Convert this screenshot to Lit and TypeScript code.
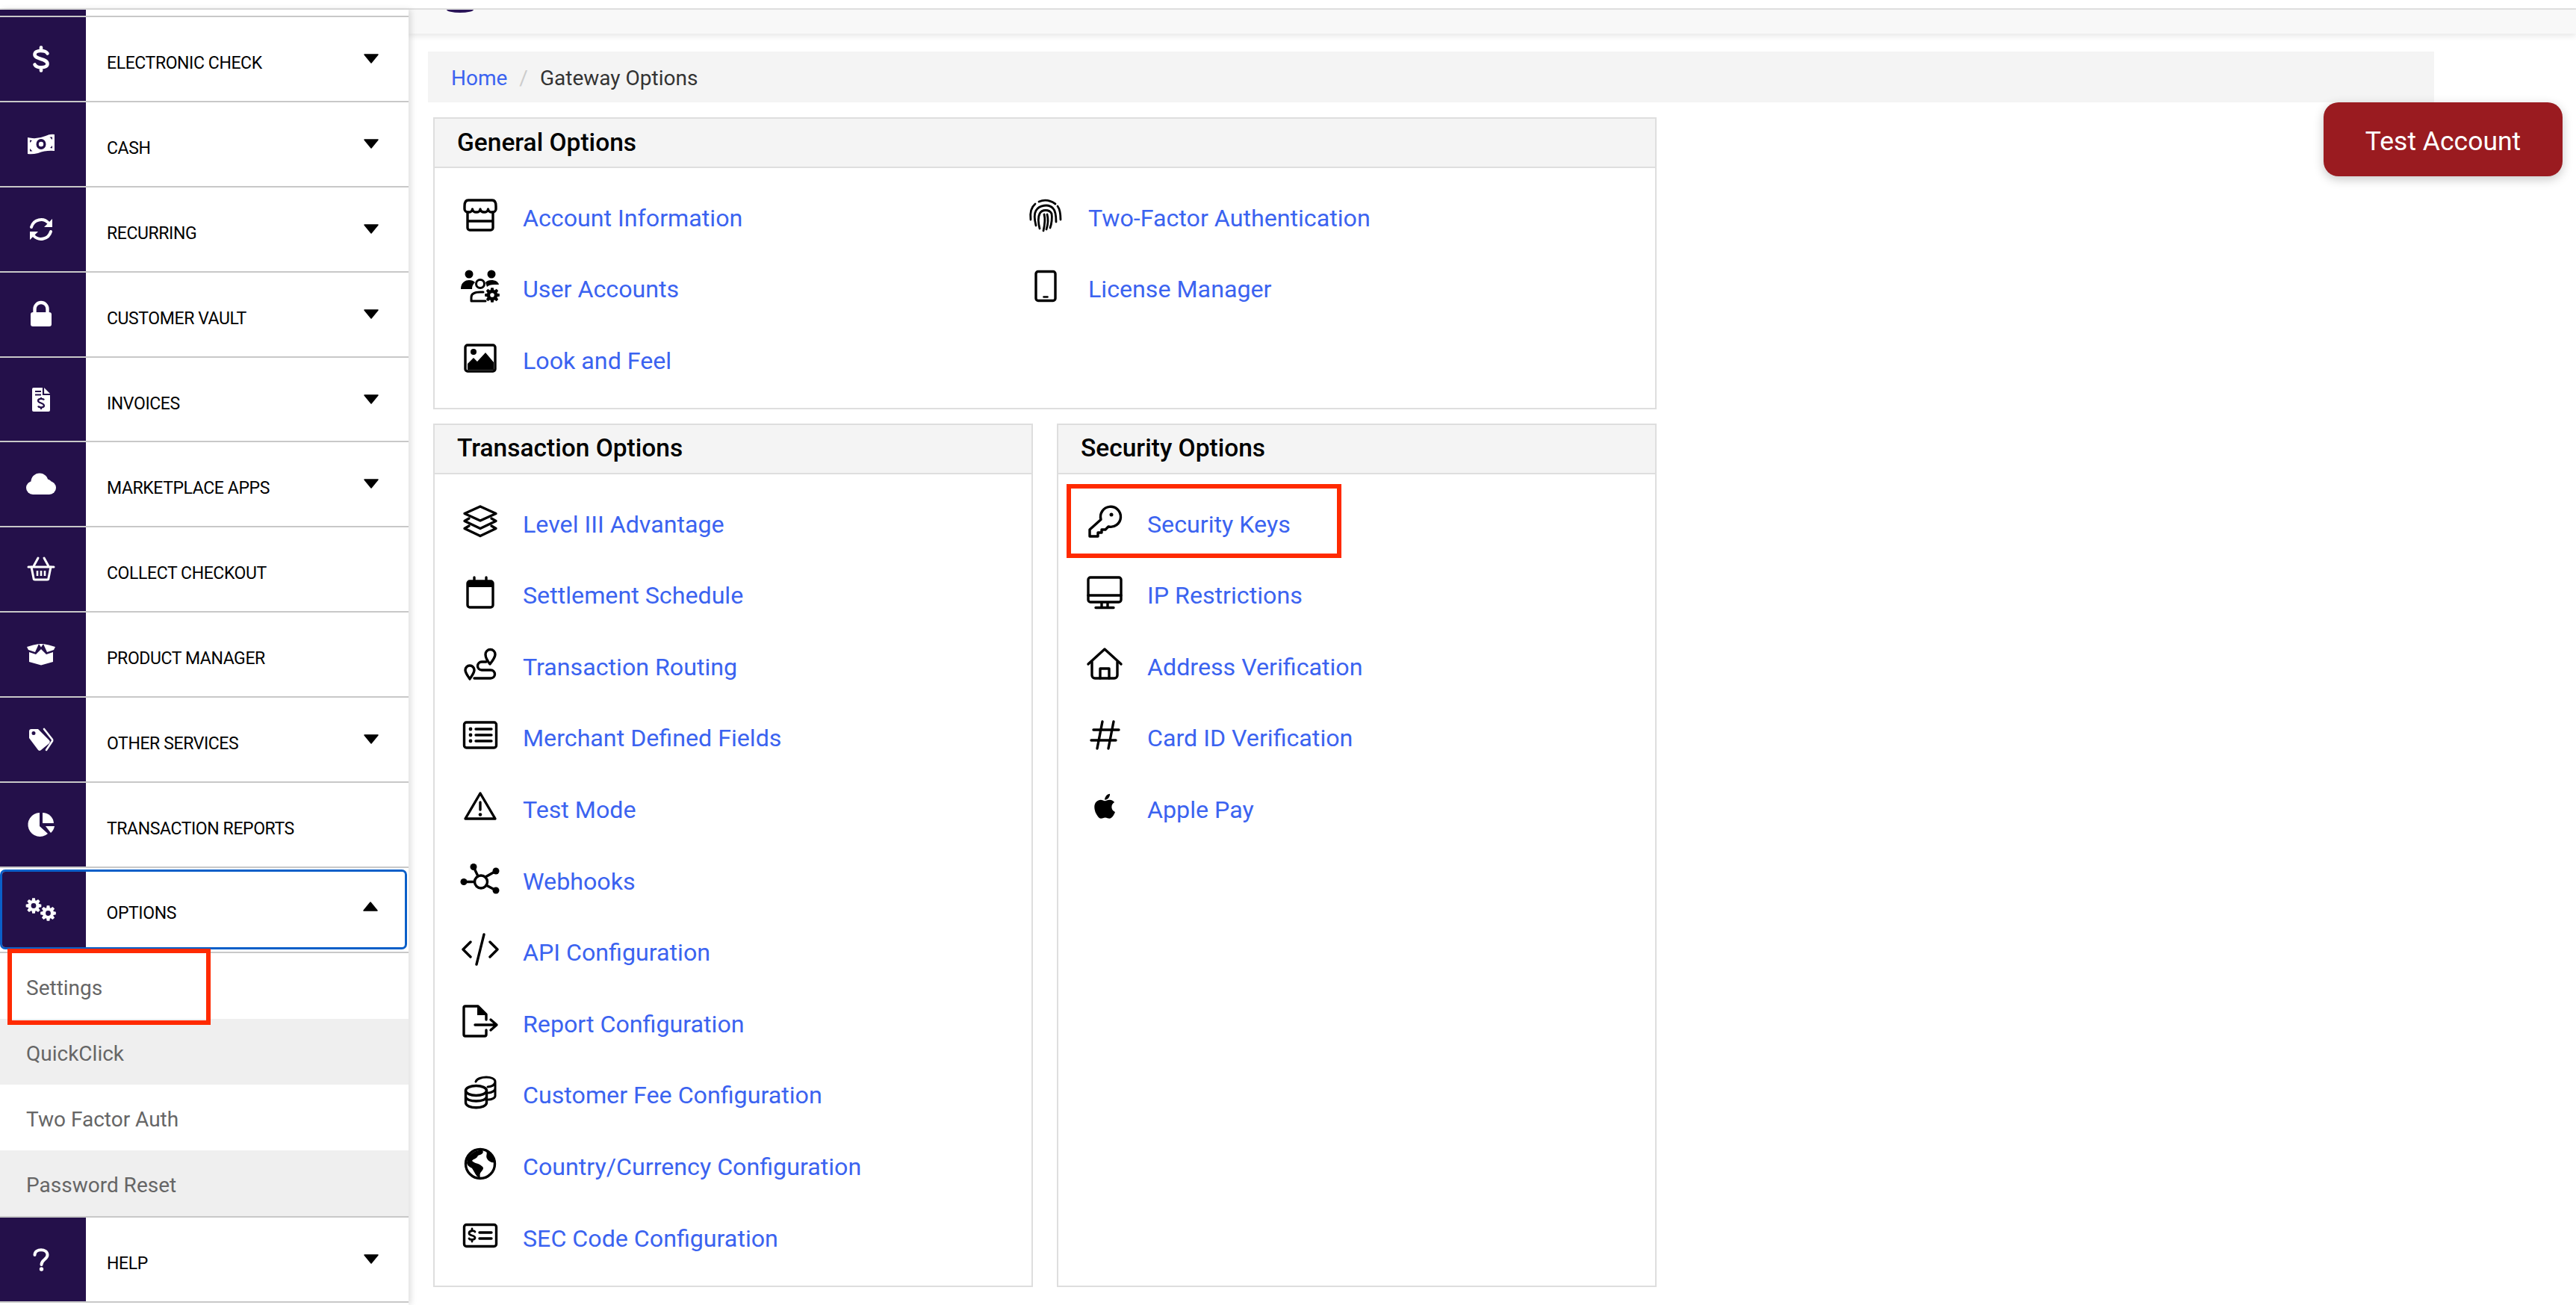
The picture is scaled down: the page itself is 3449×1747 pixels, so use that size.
import { LitElement, html, svg, css } from "lit";
import { customElement } from "lit/decorators.js";

function gear(cx: number, cy: number, ro: number, ri: number, hole: number, teeth = 8) {
  const pts: string[] = [];
  const step = (Math.PI * 2) / teeth;
  for (let i = 0; i < teeth; i++) {
    const a = i * step;
    const w = step * 0.22;
    const list: [number, number][] = [
      [ri, a - step / 2 + w * 0.4],
      [ro, a - w],
      [ro, a + w],
      [ri, a + step / 2 - w * 0.4],
    ];
    for (const [r, t] of list) {
      pts.push(`${(cx + r * Math.cos(t)).toFixed(2)} ${(cy + r * Math.sin(t)).toFixed(2)}`);
    }
  }
  return `M${pts.join("L")}Z M${cx - hole} ${cy}a${hole} ${hole} 0 1 0 ${hole * 2} 0a${hole} ${hole} 0 1 0 ${-hole * 2} 0Z`;
}

const DARK = "#24104a";

const side: Record<string, any> = {
  dollar: svg`<path class="s" stroke-width="4.6" d="M8.5 -7.5C6 -12 -8.5 -13 -8.5 -6C-8.5 1 8.5 -1 8.5 6.5C8.5 13 -6 12.5 -8.5 7.5M0 -15.5V-12M0 12V15.5"/>`,
  money: svg`<path class="f" fill-rule="evenodd" d="M-18 -9Q-6 -6 6 -11Q12 -14 18 -13V9Q6 8 -4 12Q-12 14 -18 13ZM-6.500 0a6.500 7 0 1 0 13 0a6.500 7 0 1 0 -13 0ZM-15 -5.500V-2L-12 -5ZM15 -9.500H11.500L15 -6ZM-15 9.500H-11.500L-15 6ZM15 5.500L12 5L15 2Z"/><circle class="f" cx="0" cy="0" r="3.200"/>`,
  sync: svg`<path class="s" stroke-width="4" stroke-linecap="butt" d="M-13 -3A13.5 13.5 0 0 1 10 -8.500M13 3A13.5 13.5 0 0 1 -10 8.500"/><path class="f" d="M15 -14V-3H4ZM-15 14V3H-4Z"/>`,
  lock: svg`<path class="s" stroke-width="4.4" d="M-8.500 -3V-7.500a8.500 8.500 0 0 1 17 0V-3"/><rect class="f" x="-14" y="-3" width="28" height="19" rx="3"/>`,
  invoice: svg`<path class="f" d="M-12 -14a2 2 0 0 1 2 -2H4L12 -8V14a2 2 0 0 1 -2 2H-10a2 2 0 0 1 -2 -2Z"/><path fill="none" stroke=${DARK} stroke-width="2.2" d="M-8 -11H0M-8 -6.500H0M3 -16V-7H12"/><path fill="none" stroke=${DARK} stroke-width="2.2" d="M4 0.500C3 -1.500 -4 -2 -4 1.500C-4 5 4 4 4 8C4 11 -3 11 -4 8.500M0 -3V-1M0 11V13"/>`,
  cloud: svg`<g class="f"><circle cx="-11" cy="5" r="9"/><circle cx="-2" cy="-3" r="11.500"/><circle cx="11" cy="5" r="9"/><circle cx="8" cy="0" r="6.500"/><rect x="-11" y="3" width="22" height="11"/></g>`,
  basket: svg`<g fill="none" stroke="#fff" stroke-width="3" stroke-linecap="round" stroke-linejoin="round"><path d="M-17 -3H17"/><path d="M-13 -3L-10 12a2 2 0 0 0 2 2H8a2 2 0 0 0 2 -2L13 -3"/><path d="M-10 -4L-4 -15M10 -4L4 -15"/><path stroke-width="2.6" stroke-linecap="butt" d="M-5 2V9M0 2V9M5 2V9"/></g>`,
  box: svg`<path class="f" d="M-16 -3L-7 0L0 -7L7 0L16 -3V10L0 14.500L-16 10Z"/><path class="f" d="M-19 -10Q-10 -13 -3 -14L-8 -3L-17 -6ZM19 -10Q10 -13 3 -14L8 -3L17 -6Z"/><path class="f" d="M-3 -14H3L0 -9.500Z"/>`,
  tags: svg`<path class="f" fill-rule="evenodd" d="M-16 -11a3 3 0 0 1 3 -3H-4L11 1a3 3 0 0 1 0 4L0 14a3 3 0 0 1 -4 0L-16 -2ZM-12.500 -8.500a2.500 2.500 0 1 0 5 0a2.500 2.500 0 1 0 -5 0Z"/><path class="s" stroke-width="2.6" d="M4 -14L15 0a3 3 0 0 1 0 2L7 14"/>`,
  pie: svg`<path class="f" d="M-2 -16A16 16 0 1 0 9 12L-2 2Z"/><path class="f" d="M2 -16A15 15 0 0 1 17 -2H2Z"/><path class="f" d="M6 2H18A16 16 0 0 1 13 11Z"/>`,
  cogs: svg`<path class="f" fill-rule="evenodd" d=${gear(-10, -4.5, 10.5, 7.5, 3.4)}/><path class="f" fill-rule="evenodd" d=${gear(9.5, 5.5, 10.5, 7.5, 3.4)}/>`,
  help: svg`<path class="s" stroke-width="4" d="M-8.500 -6C-8.500 -15 8.500 -15 8.500 -6C8.500 0 0.500 0 0.500 7"/><circle class="f" cx="0.500" cy="13" r="2.700"/>`,
};

const ic: Record<string, any> = {
  store: svg`<path d="M-16 -20H16Q21 -20 21 -12V-8a5.250 4 0 0 1 -10.500 0a5.250 4 0 0 1 -10.500 0a5.250 4 0 0 1 -10.500 0a5.250 4 0 0 1 -10.500 0V-12Q-21 -20 -16 -20Z"/><path d="M-17 -4V17a3 3 0 0 0 3 3H14a3 3 0 0 0 3 -3V-4M-17 8H17"/>`,
  users: svg`<g class="k"><circle cx="-15" cy="-16" r="5.500"/><circle cx="15" cy="-16" r="5.500"/><path d="M-26 4C-26 -5 -20 -8 -15 -8C-11 -8 -9 -7 -7 -5C-10 -2 -11 0 -11 4Z"/><path d="M7 -5C9 -7 11 -8 15 -8C20 -8 24 -6 25 -2L19 -2C14 -2 11 -1 9 1Z"/></g><circle stroke-width="3" cx="0" cy="-3" r="5.500"/><path stroke-width="3" d="M-12 20V15C-12 10 -8 8 0 8H4M-12 20H7"/><path class="k" fill-rule="evenodd" d=${gear(16, 12, 10, 7.2, 2.8)}/>`,
  image: svg`<rect x="-20" y="-17" width="40" height="35" rx="3"/><circle class="k" cx="-9" cy="-8" r="4"/><path class="k" d="M-17 16V8L-9 0L-4 5L7 -7L18 6V16Z"/>`,
  finger: svg`<g stroke-width="2.800"><path d="M-20 6C-21 -2 -20 -10 -14 -15"/><path d="M-9 -18C-2 -21 6 -20 13 -15"/><path d="M16 -12C19 -8 20 -3 20 6"/><path d="M-13 14C-15 6 -16 -1 -13 -6C-9 -13 4 -16 10 -9C14 -5 14 3 14 9"/><path d="M-8 18C-10 10 -10 2 -8 -2C-5 -8 5 -8 8 -2C9 3 8 12 6 17"/><path d="M-3 21C-1 12 0 6 -2 -1"/><path d="M2 -1C4 6 3 13 1 19"/></g>`,
  phone: svg`<rect x="-13" y="-19.500" width="26" height="39" rx="3"/><path stroke-width="2.600" d="M-2.500 14.500H2.500"/>`,
  layers: svg`<path d="M0 -20L21 -10.500L0 -1L-21 -10.500Z"/><path d="M-15 -4L-21 -0.500L0 9.500L21 -0.500L15 -4"/><path d="M-15 6L-21 9.500L0 19.500L21 9.500L15 6"/>`,
  calendar: svg`<rect x="-17" y="-15" width="34" height="35" rx="3"/><path class="k" d="M-17 -15H17V-7H-17Z"/><path d="M-8 -20V-14M8 -20V-14"/>`,
  route: svg`<path d="M13 0C9 -5 7 -9 7 -13a6.500 6.500 0 0 1 13 0C20 -9 17 -5 13 0Z"/><path d="M-14 20C-17 15 -20 12 -20 8a6 6 0 0 1 12 0C-8 12 -11 15 -14 20Z"/><path d="M8 -3H2a5.500 5.500 0 0 0 0 11H14a5.500 5.500 0 0 1 0 11H-8"/>`,
  list: svg`<rect x="-21.500" y="-17" width="43" height="34" rx="3"/><g class="k"><circle cx="-13" cy="-8" r="2.400"/><circle cx="-13" cy="0" r="2.400"/><circle cx="-13" cy="8" r="2.400"/></g><path d="M-6 -8H15M-6 0H15M-6 8H15"/>`,
  warn: svg`<path d="M0 -18L20 16H-20Z"/><path d="M0 -6V4"/><circle class="k" cx="0" cy="10.500" r="2.300"/>`,
  hooks: svg`<circle cx="1" cy="4.500" r="8.500"/><path d="M-9 -15.500L-3 -3M21 -10L7 -2M-22 4.500H-7.500M21 16L8 9"/><g class="k"><circle cx="-9" cy="-15.500" r="4.500"/><circle cx="21" cy="-10" r="4.500"/><circle cx="-22" cy="4.500" r="4.500"/><circle cx="21" cy="16" r="4.500"/></g>`,
  code: svg`<path d="M-13 -10L-23 0L-13 10M13 -10L23 0L13 10M5 -20L-5 20"/>`,
  fileout: svg`<path d="M8 12V18a2 2 0 0 1 -2 2H-20a2 2 0 0 1 -2 -2V-18a2 2 0 0 1 2 -2H-3L8 -9V-2"/><path class="k" d="M-4 -20V-8H8Z"/><path d="M-7 5H21M14 -2L22 5L14 12"/>`,
  coins: svg`<ellipse cx="-5.500" cy="-2" rx="14" ry="6.500"/><path d="M-19.500 -2V14C-19.500 23 8.500 23 8.500 14V-2M-19.500 6C-19.500 14 8.500 14 8.500 6"/><path stroke-width="3" d="M-6 -14C-3 -22 20 -22 20 -14V5C20 8 15 10 11 10M20 -14C20 -9 14 -7 10 -7M20 -5C20 -2 15 1 11 1"/>`,
  globe: svg`<circle r="19.500" cy="0"/><path class="k" d="M-17 -8C-12 -15 -4 -19 3 -18C6 -14 0 -12 -3 -11C-5 -6 -9 -7 -11 -4C-7 0 -2 -1 2 3C6 6 3 8 1 11C-2 14 1 18 -1 19C-6 17 -8 10 -11 6C-14 4 -17 3 -18 -1ZM8 -17C13 -14 18 -9 19 -2C16 -1 11 -3 9 -7C7 -11 10 -13 8 -17Z"/>`,
  sec: svg`<rect x="-21.500" y="-14.500" width="43" height="29" rx="3"/><path stroke-width="2.800" d="M-7 -5C-8 -7 -15 -7 -15 -3C-15 1 -7 -1 -7 3C-7 6 -14 6 -15 4M-11 -9V-7M-11 6V8"/><path d="M-1 -4H15M-1 4H15"/>`,
  key: svg`<path d="M-5 -2.500A13.500 13.500 0 1 1 5 7L1 11H-4V15H-9V20H-20V11Z"/><circle class="k" cx="9" cy="-9" r="2.500"/>`,
  desktop: svg`<rect x="-22" y="-20" width="44" height="33" rx="3"/><path d="M-22 4H22M-4 14V20M4 14V20M-12 20.500H12"/>`,
  home: svg`<path d="M-22 0L0 -20L22 0"/><path d="M-17 -3V15a4 4 0 0 0 4 4H13a4 4 0 0 0 4 -4V-3"/><path d="M-6 19V6H6V19"/>`,
  hash: svg`<path d="M-3 -18L-10 18M12 -18L5 18M-15 -7H19M-18 7H15"/>`,
  apple: svg`<path class="k" stroke="none" transform="translate(-14 -19.500) scale(.0735)" d="M318.7 268.7c-.2-36.700 16.400-64.400 50-84.800-18.800-26.900-47.200-41.700-84.700-44.600-35.500-2.800-74.300 20.700-88.500 20.700-15 0-49.400-19.700-76.400-19.700C63.300 141.200 4 184.800 4 273.500q0 39.300 14.400 81.200c12.800 36.700 59 126.700 107.200 125.200 25.200-.6 43-17.900 75.800-17.900 31.800 0 48.300 17.900 76.400 17.900 48.600-.7 90.400-82.500 102.600-119.300-65.200-30.700-61.700-90-61.700-91.900zm-56.600-164.200c27.300-32.400 24.800-61.900 24-72.500-24.100 1.400-52 16.400-67.900 34.900-17.500 19.800-27.800 44.300-25.600 71.900 26.100 2 49.900-11.400 69.500-34.300z"/>`,
};

const menu = [
  ["dollar", "ELECTRONIC CHECK", 1],
  ["money", "CASH", 1],
  ["sync", "RECURRING", 1],
  ["lock", "CUSTOMER VAULT", 1],
  ["invoice", "INVOICES", 1],
  ["cloud", "MARKETPLACE APPS", 1],
  ["basket", "COLLECT CHECKOUT", 0],
  ["box", "PRODUCT MANAGER", 0],
  ["tags", "OTHER SERVICES", 1],
  ["pie", "TRANSACTION REPORTS", 0],
] as [string, string, number][];

const sub = ["Settings", "QuickClick", "Two Factor Auth", "Password Reset"];

const general = [
  ["store", "Account Information"],
  ["finger", "Two-Factor Authentication"],
  ["users", "User Accounts"],
  ["phone", "License Manager"],
  ["image", "Look and Feel"],
];
const transaction = [
  ["layers", "Level III Advantage"],
  ["calendar", "Settlement Schedule"],
  ["route", "Transaction Routing"],
  ["list", "Merchant Defined Fields"],
  ["warn", "Test Mode"],
  ["hooks", "Webhooks"],
  ["code", "API Configuration"],
  ["fileout", "Report Configuration"],
  ["coins", "Customer Fee Configuration"],
  ["globe", "Country/Currency Configuration"],
  ["sec", "SEC Code Configuration"],
];
const security = [
  ["key", "Security Keys"],
  ["desktop", "IP Restrictions"],
  ["home", "Address Verification"],
  ["hash", "Card ID Verification"],
  ["apple", "Apple Pay"],
];

@customElement("app-root")
export class AppRoot extends LitElement {
  static styles = css`
    :host {
      display: block;
      position: relative;
      width: 3449px;
      height: 1747px;
      overflow: hidden;
      background: #fff;
      font-family: "Roboto", "Liberation Sans", sans-serif;
      color: #000;
    }
    .strip { height: 11px; border-bottom: 2px solid #e2e2e2; }
    .shell { display: flex; height: 1734px; }
    .sidebar {
      width: 547px;
      flex: none;
      background: #fff;
      box-shadow: 3px 0 8px rgba(0, 0, 0, 0.13);
      position: relative;
      z-index: 2;
    }
    .stub { height: 10px; border-bottom: 2px solid #c8c8c8; box-sizing: border-box; }
    .stub div { width: 115px; height: 8px; background: #24104a; }
    .row {
      display: flex;
      height: 113.9px;
      box-sizing: border-box;
      border-bottom: 2px solid #c8c8c8;
    }
    .ico {
      width: 115px;
      flex: none;
      background: #24104a;
      display: flex;
      align-items: center;
      justify-content: center;
    }
    .ico svg { width: 56px; height: 56px; margin-left: -5px; }
    .ico .f { fill: #fff; }
    .ico .s { fill: none; stroke: #fff; stroke-linecap: round; stroke-linejoin: round; }
    .lbl {
      flex: 1;
      display: flex;
      align-items: center;
      padding: 11px 0 0 28px;
      font-size: 23px;
      letter-spacing: -0.4px;
    }
    .name { flex: 1; }
    .caret {
      width: 22px;
      height: 14px;
      margin: 0 39px 11px 0;
      flex: none;
      fill: #000;
      stroke: #000;
      stroke-width: 1.5;
      stroke-linejoin: round;
    }
    .focus { padding: 2px 2px 3px 0; }
    .focus .box {
      flex: 1;
      display: flex;
      border: 3.5px solid #0a5fc8;
      border-radius: 7px;
      overflow: hidden;
      box-sizing: border-box;
    }
    .focus .ico { width: 111.5px; }
    .focus .caret { margin: 0 35.5px 19px 0; }
    .focus .ico svg { margin-left: -8.5px; }
    .item {
      height: 88px;
      box-sizing: border-box;
      display: flex;
      align-items: center;
      padding: 6px 0 0 35px;
      font-size: 28px;
      color: #666;
      position: relative;
    }
    .item:nth-child(even) { background: #efefef; }
    .sublist { border-bottom: 2px solid #c8c8c8; }
    .flag { position: absolute; box-sizing: border-box; border: 6px solid #ff2a00; z-index: 3; }
    .flag.settings { left: 10px; top: -6px; width: 272px; height: 102px; }
    .flag.keys { left: -23px; top: -6px; width: 368px; height: 99px; }
    .main { flex: 1; min-width: 0; }
    .bar {
      height: 32px;
      background: #f8f8f8;
      box-shadow: 0 3px 8px rgba(0, 0, 0, 0.1);
      padding-left: 51px;
    }
    .logo { width: 36px; height: 4px; background: #2a1458; border-radius: 0 0 18px 18px / 0 0 4px 4px; }
    .crumb {
      margin: 24px 190px 0 26px;
      height: 68px;
      box-sizing: border-box;
      background: #f4f4f4;
      display: flex;
      align-items: center;
      padding: 2px 0 0 31px;
      font-size: 28px;
      color: #333;
    }
    .crumb a { color: #3b63f0; }
    .crumb i { font-style: normal; color: #ccc; margin: 0 16px; }
    .content { margin: 20px 0 0 33px; width: 1638px; display: flex; flex-direction: column; gap: 19px; }
    .panel { border: 2px solid #dedede; box-sizing: border-box; background: #fff; }
    .head {
      box-sizing: border-box;
      height: 66px;
      padding: 0 0 2px 30px;
      background: #f4f4f4;
      border-bottom: 2px solid #dedede;
      display: flex;
      align-items: center;
      font-size: 33.5px;
      font-weight: 500;
    }
    .links { padding: 19px 0 0 33px; }
    .general { display: grid; grid-template-columns: 757px 1fr; padding-bottom: 15px; }
    .row2 { display: flex; align-items: center; height: 95.6px; position: relative; }
    .row2 svg {
      width: 56px;
      height: 56px;
      flex: none;
      margin: -8px 29px 0 0;
      fill: none;
      stroke: #000;
      stroke-width: 3.4;
      stroke-linecap: round;
      stroke-linejoin: round;
    }
    .row2 .k { fill: #000; stroke: none; }
    .row2 a { color: #3b63f0; font-size: 32.2px; }
    .pair { display: grid; grid-template-columns: 803px 803px; gap: 32px; }
    .pair .panel { height: 1156px; }
    .pair .panel + .panel .links { padding-left: 34px; }
    .btn {
      position: absolute;
      left: 3111px;
      top: 137px;
      width: 320px;
      height: 99px;
      box-sizing: border-box;
      padding-top: 4px;
      background: #9a1b20;
      border-radius: 20px;
      color: #fff;
      font-size: 35.5px;
      display: flex;
      align-items: center;
      justify-content: center;
      box-shadow: 0 4px 14px rgba(0, 0, 0, 0.22);
      z-index: 4;
    }
  `;

  private sideIcon(name: string) {
    return html`<div class="ico"><svg viewBox="-28 -28 56 56">${side[name]}</svg></div>`;
  }

  private caret(up = false) {
    return html`<svg class="caret" viewBox="-1 -1 22 14"><path d=${up ? "M1 12H19L10 1Z" : "M1 0H19L10 11Z"} /></svg>`;
  }

  private link(icon: string, label: string, flag = false) {
    return html`<div class="row2">
      <svg viewBox="-28 -28 56 56">${ic[icon]}</svg><a>${label}</a>
      ${flag ? html`<span class="flag keys"></span>` : ""}
    </div>`;
  }

  render() {
    return html`
      <div class="strip"></div>
      <div class="shell">
        <nav class="sidebar">
          <div class="stub"><div></div></div>
          ${menu.map(
            ([i, t, c]) => html`<div class="row">
              ${this.sideIcon(i)}
              <div class="lbl"><span class="name">${t}</span>${c ? this.caret() : ""}</div>
            </div>`
          )}
          <div class="row focus">
            <div class="box">
              ${this.sideIcon("cogs")}
              <div class="lbl"><span class="name">OPTIONS</span>${this.caret(true)}</div>
            </div>
          </div>
          <div class="sublist">
            ${sub.map(
              (s, i) => html`<div class="item">${s}${i === 0 ? html`<span class="flag settings"></span>` : ""}</div>`
            )}
          </div>
          <div class="row">
            ${this.sideIcon("help")}
            <div class="lbl"><span class="name">HELP</span>${this.caret()}</div>
          </div>
        </nav>
        <main class="main">
          <div class="bar"><div class="logo"></div></div>
          <div class="crumb"><a>Home</a><i>/</i><span>Gateway Options</span></div>
          <div class="content">
            <section class="panel">
              <div class="head">General Options</div>
              <div class="links general">${general.map(([i, t]) => this.link(i, t))}</div>
            </section>
            <div class="pair">
              <section class="panel">
                <div class="head">Transaction Options</div>
                <div class="links">${transaction.map(([i, t]) => this.link(i, t))}</div>
              </section>
              <section class="panel">
                <div class="head">Security Options</div>
                <div class="links">${security.map(([i, t], n) => this.link(i, t, n === 0))}</div>
              </section>
            </div>
          </div>
        </main>
      </div>
      <div class="btn">Test Account</div>
    `;
  }
}
